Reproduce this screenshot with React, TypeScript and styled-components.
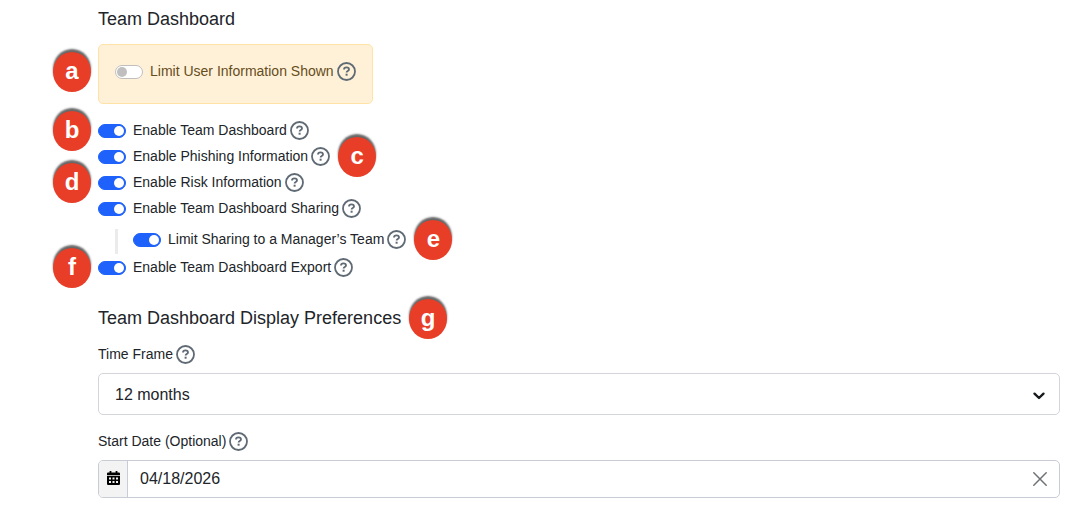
import React, { useState } from 'react';
import styled, { createGlobalStyle } from 'styled-components';

const GlobalStyle = createGlobalStyle`
  *, *::before, *::after { box-sizing: border-box; }
  body {
    margin: 0;
    background: #fff;
    color: #212529;
    font-family: "Liberation Sans", Arial, Helvetica, sans-serif;
    font-size: 14px;
    line-height: 20px;
  }
  button, input, select { font: inherit; color: inherit; margin: 0; }
`;

const Page = styled.main`
  padding: 6px 12px 14px 98px;
`;

const Heading = styled.h2`
  position: relative;
  width: fit-content;
  margin: 0;
  font-size: 18px;
  line-height: 26px;
  font-weight: 400;
`;

const Notice = styled.div`
  width: fit-content;
  margin: 12px 0 13px;
  padding: 13px 16px 19px;
  border: 1px solid #ffe3a6;
  border-radius: 5px;
  background: #fff1d8;
  color: #664d20;
`;

const Row = styled.div`
  position: relative;
  display: flex;
  align-items: center;
  width: fit-content;
  min-height: 26px;
`;

const SubGroup = styled.div`
  margin: 8px 0 0 17px;
  padding-left: 15px;
  border-left: 3px solid #ebebeb;
  min-height: 25px;

  ${Row} { min-height: 20px; }
`;

const Toggle = styled.input`
  appearance: none;
  display: flex;
  align-items: center;
  flex: none;
  width: 28px;
  height: 14px;
  margin: 2px 7px 0 0;
  padding: 0 1px;
  border: 1px solid #bfbfbf;
  border-radius: 7px;
  background: #fff;
  cursor: pointer;

  &::before {
    content: "";
    width: 10px;
    height: 10px;
    border-radius: 50%;
    background: #bfbfbf;
  }
  &:checked {
    justify-content: flex-end;
    border-color: #1f62fb;
    background: #1f62fb;
  }
  &:checked::before { background: #fff; }
`;

const HelpButton = styled.button`
  display: flex;
  flex: none;
  margin-left: 3px;
  padding: 0;
  border: 0;
  background: none;
  color: #5f6a74;
  cursor: pointer;
`;

const Marker = styled.span<{ $side: 'left' | 'right' }>`
  position: absolute;
  top: 50%;
  ${({ $side }) => ($side === 'left' ? 'left: -45px;' : 'left: calc(100% + 8px);')}
  display: flex;
  align-items: center;
  justify-content: center;
  width: 38px;
  height: 40px;
  margin-top: -19px;
  padding-bottom: 3px;
  border-radius: 50%;
  background: #e83e28;
  box-shadow: 0 -3px 2px 0 rgba(0, 0, 0, 0.6);
  color: #fff;
  font-size: 24px;
  line-height: 24px;
  font-weight: 700;
`;

const NoticeRow = styled(Row)`
  ${Marker} { left: -62px; }
`;

const Preferences = styled.section`
  margin-top: 25px;
`;

const FieldLabel = styled.div`
  display: flex;
  align-items: center;
  min-height: 20px;
  margin-bottom: 9px;
`;

const Field = styled.div`
  margin-top: 16px;

  ${Heading} + & { margin-top: 13px; }
`;

const SelectBox = styled.div`
  display: grid;
  align-items: center;

  & > * { grid-area: 1 / 1; }
  & > svg { justify-self: end; margin: 4px 14px 0 0; pointer-events: none; }
`;

const Select = styled.select`
  appearance: none;
  width: 100%;
  height: 42px;
  padding: 2px 40px 0 16px;
  border: 1px solid #d3d5da;
  border-radius: 5px;
  background: #fff;
  font-size: 16px;
`;

const DateBox = styled.div`
  display: flex;
  height: 38px;
  border: 1px solid #c8ccd4;
  border-radius: 5px;
  background: #fff;
  overflow: hidden;
`;

const CalendarButton = styled.button`
  display: flex;
  align-items: center;
  justify-content: center;
  width: 29px;
  padding: 0 0 2px;
  border: 0;
  border-right: 1px solid #c8ccd4;
  background: #f3f3f3;
  color: #000;
`;

const DateInput = styled.input`
  flex: 1;
  min-width: 0;
  padding: 0 12px;
  border: 0;
  outline: 0;
  background: none;
  font-size: 16px;
`;

const ClearButton = styled.button`
  display: flex;
  align-items: center;
  padding: 0 12px;
  border: 0;
  background: none;
  color: #707274;
`;

function Help({ topic }: { topic: string }) {
  return (
    <HelpButton type="button" aria-label={`Help: ${topic}`}>
      <svg width="19" height="19" viewBox="0 0 19 19" fill="none" stroke="currentColor">
        <circle cx="9.5" cy="9.5" r="8.5" strokeWidth="1.8" />
        <path d="M7 7.500c0-1.400 1-2.100 2.500-2.100s2.500.7 2.500 2c0 1.600-2.400 1.500-2.400 3" strokeWidth="1.8" />
        <path d="M9.600 11.700v2" strokeWidth="2" />
      </svg>
    </HelpButton>
  );
}

interface SettingProps {
  id: string;
  label: string;
  initial?: boolean;
  marker?: string;
  side?: 'left' | 'right';
  as?: typeof Row;
}

function Setting({ id, label, initial = true, marker, side = 'left', as: Wrapper = Row }: SettingProps) {
  const [on, setOn] = useState(initial);
  return (
    <Wrapper>
      <Toggle id={id} type="checkbox" role="switch" checked={on} onChange={() => setOn(!on)} />
      <label htmlFor={id}>{label}</label>
      <Help topic={label} />
      {marker && <Marker $side={side}>{marker}</Marker>}
    </Wrapper>
  );
}

export default function App() {
  const [date, setDate] = useState('04/18/2026');
  return (
    <>
      <GlobalStyle />
      <Page>
        <section>
          <Heading>Team Dashboard</Heading>
          <Notice>
            <Setting id="limit-info" label="Limit User Information Shown" initial={false} marker="a" as={NoticeRow} />
          </Notice>
          <Setting id="dashboard" label="Enable Team Dashboard" marker="b" />
          <Setting id="phishing" label="Enable Phishing Information" marker="c" side="right" />
          <Setting id="risk" label="Enable Risk Information" marker="d" />
          <Setting id="sharing" label="Enable Team Dashboard Sharing" />
          <SubGroup>
            <Setting id="limit-sharing" label="Limit Sharing to a Manager’s Team" marker="e" side="right" />
          </SubGroup>
          <Setting id="export" label="Enable Team Dashboard Export" marker="f" />
        </section>
        <Preferences>
          <Heading>
            Team Dashboard Display Preferences
            <Marker $side="right">g</Marker>
          </Heading>
          <Field>
            <FieldLabel>
              <label htmlFor="time-frame">Time Frame</label>
              <Help topic="Time Frame" />
            </FieldLabel>
            <SelectBox>
              <Select id="time-frame" defaultValue="12">
                <option value="3">3 months</option>
                <option value="6">6 months</option>
                <option value="12">12 months</option>
              </Select>
              <svg width="14" height="10" viewBox="0 0 14 10" fill="none" stroke="#16191c" strokeWidth="2.4" strokeLinecap="round" strokeLinejoin="round">
                <path d="M2.500 2.700 7 7l4.500-4.300" />
              </svg>
            </SelectBox>
          </Field>
          <Field>
            <FieldLabel>
              <label htmlFor="start-date">Start Date (Optional)</label>
              <Help topic="Start Date" />
            </FieldLabel>
            <DateBox>
              <CalendarButton type="button" aria-label="Open calendar">
                <svg width="13" height="14" viewBox="0 0 13 14" fill="currentColor">
                  <path d="M2.6 0h1.8v1.6h4.2V0h1.8v1.6h1.3c.7 0 1.3.5 1.3 1.2v1.4H0V2.8c0-.7.6-1.2 1.3-1.2h1.3z" />
                  <path fillRule="evenodd" d="M0 5h13v7.7c0 .7-.6 1.3-1.3 1.3H1.3C.6 14 0 13.400 0 12.700zM2 6.500v1.900h2V6.500zM5.500 6.500v1.900h2V6.500zM9 6.500v1.900h2V6.500zM2 10.100v1.900h2v-1.900zM5.500 10.100v1.900h2v-1.900zM9 10.100v1.900h2v-1.900z" />
                </svg>
              </CalendarButton>
              <DateInput id="start-date" type="text" value={date} onChange={(e) => setDate(e.target.value)} />
              <ClearButton type="button" aria-label="Clear date" onClick={() => setDate('')}>
                <svg width="14" height="14" viewBox="0 0 14 14" fill="none" stroke="currentColor" strokeWidth="1.5" strokeLinecap="round">
                  <path d="m.8.8 12.400 12.400M13.200.8.8 13.200" />
                </svg>
              </ClearButton>
            </DateBox>
          </Field>
        </Preferences>
      </Page>
    </>
  );
}
